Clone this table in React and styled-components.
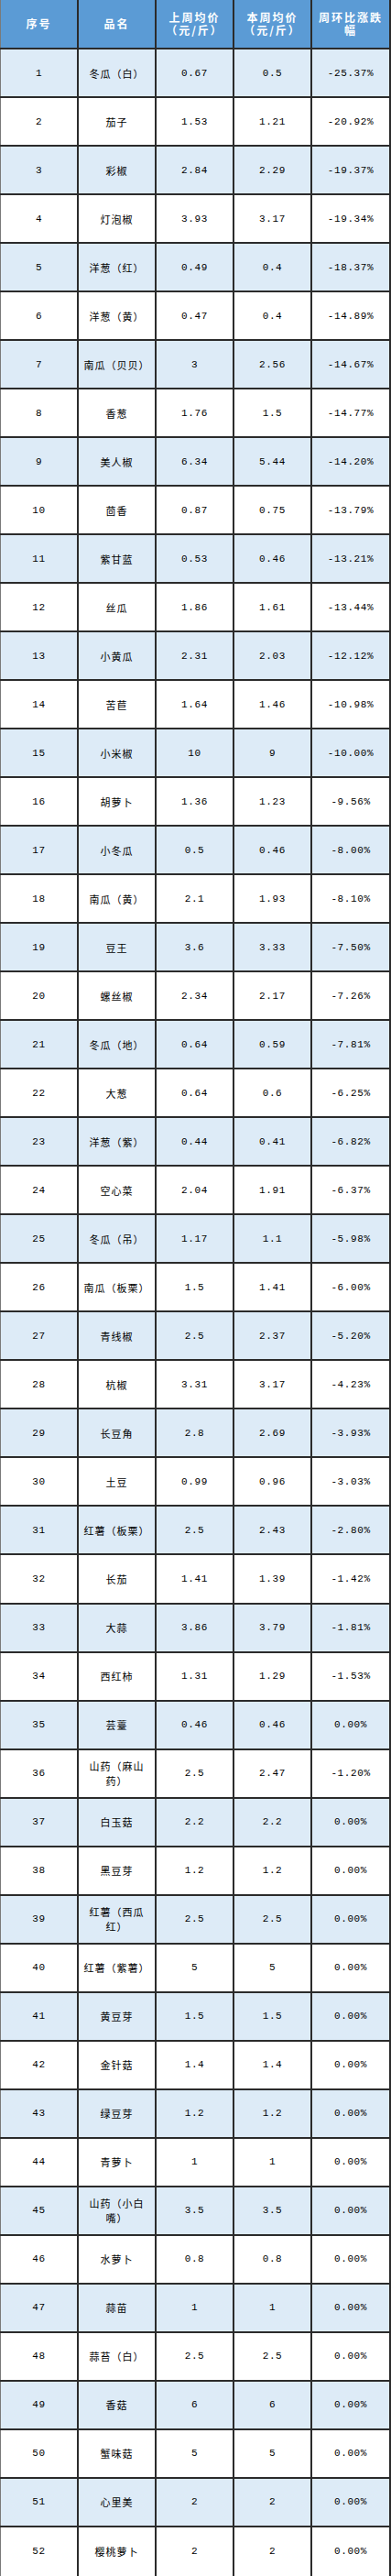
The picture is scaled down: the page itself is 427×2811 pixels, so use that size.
import React from 'react'
import styled, { createGlobalStyle } from 'styled-components'

const GlobalStyle = createGlobalStyle`
  html, body {
    margin: 0;
    padding: 0;
    background: #ffffff;
  }
`

const LINE = '#2b2b2b'

const rows = [
  ['1', '冬瓜（白）', '0.67', '0.5', '-25.37%'],
  ['2', '茄子', '1.53', '1.21', '-20.92%'],
  ['3', '彩椒', '2.84', '2.29', '-19.37%'],
  ['4', '灯泡椒', '3.93', '3.17', '-19.34%'],
  ['5', '洋葱（红）', '0.49', '0.4', '-18.37%'],
  ['6', '洋葱（黄）', '0.47', '0.4', '-14.89%'],
  ['7', '南瓜（贝贝）', '3', '2.56', '-14.67%'],
  ['8', '香葱', '1.76', '1.5', '-14.77%'],
  ['9', '美人椒', '6.34', '5.44', '-14.20%'],
  ['10', '茴香', '0.87', '0.75', '-13.79%'],
  ['11', '紫甘蓝', '0.53', '0.46', '-13.21%'],
  ['12', '丝瓜', '1.86', '1.61', '-13.44%'],
  ['13', '小黄瓜', '2.31', '2.03', '-12.12%'],
  ['14', '苦苣', '1.64', '1.46', '-10.98%'],
  ['15', '小米椒', '10', '9', '-10.00%'],
  ['16', '胡萝卜', '1.36', '1.23', '-9.56%'],
  ['17', '小冬瓜', '0.5', '0.46', '-8.00%'],
  ['18', '南瓜（黄）', '2.1', '1.93', '-8.10%'],
  ['19', '豆王', '3.6', '3.33', '-7.50%'],
  ['20', '螺丝椒', '2.34', '2.17', '-7.26%'],
  ['21', '冬瓜（地）', '0.64', '0.59', '-7.81%'],
  ['22', '大葱', '0.64', '0.6', '-6.25%'],
  ['23', '洋葱（紫）', '0.44', '0.41', '-6.82%'],
  ['24', '空心菜', '2.04', '1.91', '-6.37%'],
  ['25', '冬瓜（吊）', '1.17', '1.1', '-5.98%'],
  ['26', '南瓜（板栗）', '1.5', '1.41', '-6.00%'],
  ['27', '青线椒', '2.5', '2.37', '-5.20%'],
  ['28', '杭椒', '3.31', '3.17', '-4.23%'],
  ['29', '长豆角', '2.8', '2.69', '-3.93%'],
  ['30', '土豆', '0.99', '0.96', '-3.03%'],
  ['31', '红薯（板栗）', '2.5', '2.43', '-2.80%'],
  ['32', '长茄', '1.41', '1.39', '-1.42%'],
  ['33', '大蒜', '3.86', '3.79', '-1.81%'],
  ['34', '西红柿', '1.31', '1.29', '-1.53%'],
  ['35', '芸薹', '0.46', '0.46', '0.00%'],
  ['36', '山药（麻山药）', '2.5', '2.47', '-1.20%'],
  ['37', '白玉菇', '2.2', '2.2', '0.00%'],
  ['38', '黑豆芽', '1.2', '1.2', '0.00%'],
  ['39', '红薯（西瓜红）', '2.5', '2.5', '0.00%'],
  ['40', '红薯（紫薯）', '5', '5', '0.00%'],
  ['41', '黄豆芽', '1.5', '1.5', '0.00%'],
  ['42', '金针菇', '1.4', '1.4', '0.00%'],
  ['43', '绿豆芽', '1.2', '1.2', '0.00%'],
  ['44', '青萝卜', '1', '1', '0.00%'],
  ['45', '山药（小白嘴）', '3.5', '3.5', '0.00%'],
  ['46', '水萝卜', '0.8', '0.8', '0.00%'],
  ['47', '蒜苗', '1', '1', '0.00%'],
  ['48', '蒜苔（白）', '2.5', '2.5', '0.00%'],
  ['49', '香菇', '6', '6', '0.00%'],
  ['50', '蟹味菇', '5', '5', '0.00%'],
  ['51', '心里美', '2', '2', '0.00%'],
  ['52', '樱桃萝卜', '2', '2', '0.00%'],
]

const Table = styled.div`
  width: 427px;
  font-family: "Liberation Mono", "Noto Sans CJK SC", monospace;
  color: #000000;
`

const HeaderRow = styled.div`
  display: grid;
  grid-template-columns: 86px 85px 85px 85px 86px;
  height: 54px;
  box-sizing: border-box;
  background: #5b9bd5;
  border-bottom: 2px solid ${LINE};
`

const BodyRow = styled.div`
  display: grid;
  grid-template-columns: 86px 85px 85px 85px 86px;
  height: 53.02px;
  box-sizing: border-box;
  background: ${(props) => (props.$shade ? '#ddebf7' : '#ffffff')};
  border-bottom: 2px solid ${LINE};
  &:last-child {
    border-bottom: none;
  }
`

const Cell = styled.div`
  display: flex;
  align-items: center;
  justify-content: center;
  text-align: center;
  box-sizing: border-box;
  padding: 0 4px;
  border-right: 2px solid ${LINE};
  text-spacing-trim: space-all;
  &:first-child {
    border-left: 1px solid #7a7a7a;
  }
`

const HeadCell = styled(Cell)`
  color: #ffffff;
  font-family: "Noto Sans CJK SC", sans-serif;
  font-weight: 700;
  font-size: 12px;
  letter-spacing: 2px;
  line-height: 14px;
`

const NumCell = styled(Cell)`
  font-size: 11px;
  letter-spacing: 0.6px;
`

const NameCell = styled(Cell)`
  font-family: "Noto Sans CJK SC", sans-serif;
  font-size: 11px;
  letter-spacing: 1px;
  line-height: 16px;
`

export default function App() {
  return (
    <>
      <GlobalStyle />
      <Table>
        <HeaderRow>
          <HeadCell>序号</HeadCell>
          <HeadCell>品名</HeadCell>
          <HeadCell>
            上周均价
            <br />
            （元/斤）
          </HeadCell>
          <HeadCell>
            本周均价
            <br />
            （元/斤）
          </HeadCell>
          <HeadCell>周环比涨跌幅</HeadCell>
        </HeaderRow>
        {rows.map(([no, name, last, now, change], i) => (
          <BodyRow key={no} $shade={i % 2 === 0}>
            <NumCell>{no}</NumCell>
            <NameCell>{name}</NameCell>
            <NumCell>{last}</NumCell>
            <NumCell>{now}</NumCell>
            <NumCell>{change}</NumCell>
          </BodyRow>
        ))}
      </Table>
    </>
  )
}
